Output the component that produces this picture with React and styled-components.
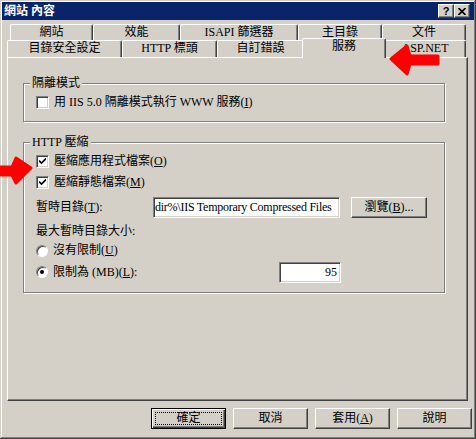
import React from "react";
import styled, { createGlobalStyle } from "styled-components";

const GlobalStyle = createGlobalStyle`
  html, body {
    margin: 0;
    padding: 0;
    background: #d4d0c8;
  }
  body {
    font-family: "Liberation Serif", "Noto Sans CJK TC", serif;
    font-size: 12px;
    color: #000;
  }
`;

const Window = styled.div`
  position: relative;
  width: 476px;
  height: 439px;
  box-sizing: border-box;
  padding: 2px;
  background: #d4d0c8;
  box-shadow: inset -1px -1px #404040, inset 1px 1px #d4d0c8,
    inset -2px -2px #808080, inset 2px 2px #fff;
  display: flex;
  flex-direction: column;
  overflow: hidden;
`;

const TitleBar = styled.div`
  height: 18px;
  background: #0a246a;
  display: flex;
  align-items: center;
  padding: 0 4px 0 2px;
`;

const TitleText = styled.div`
  flex: 1;
  color: #fff;
  font-weight: bold;
  font-size: 12px;
  line-height: 14px;
`;

const CaptionButton = styled.div`
  width: 16px;
  height: 14px;
  box-sizing: border-box;
  background: #d4d0c8;
  border: 1px solid;
  border-color: #fff #404040 #404040 #fff;
  box-shadow: inset -1px -1px #808080;
  display: flex;
  align-items: center;
  justify-content: center;
  font-family: "Liberation Sans", sans-serif;
  font-weight: bold;
  font-size: 11px;
  line-height: 11px;
`;

const TabRow = styled.div`
  display: flex;
  align-items: flex-start;
  height: ${(p) => p.$h}px;
  padding-left: ${(p) => p.$indent}px;
  margin-top: ${(p) => p.$mt || 0}px;
`;

const Tab = styled.div`
  position: relative;
  box-sizing: border-box;
  width: ${(p) => (p.$selected ? p.$w + 4 : p.$w)}px;
  height: ${(p) => (p.$selected ? p.$h + 3 : p.$h)}px;
  margin: ${(p) => (p.$selected ? "-2px -2px 0" : "0")};
  z-index: ${(p) => (p.$selected ? 2 : "auto")};
  background: #d4d0c8;
  border-top: 1px solid #fff;
  border-left: 1px solid #fff;
  border-right: 1px solid #404040;
  border-radius: 2px 2px 0 0;
  box-shadow: inset -1px 0 #808080;
  display: flex;
  justify-content: center;
  padding-top: 1px;
  line-height: 13px;
  white-space: nowrap;
`;

const Panel = styled.div`
  position: relative;
  z-index: 1;
  margin-left: 5px;
  width: 461px;
  height: 344px;
  box-sizing: border-box;
  border-top: 1px solid #fff;
  border-left: 1px solid #fff;
  border-right: 1px solid #404040;
  border-bottom: 1px solid #404040;
  box-shadow: inset -1px -1px #808080;
  padding: 19px 22px 0 15px;
`;

const Group = styled.fieldset`
  margin: ${(p) => p.$mt || 0}px 0 0;
  padding: ${(p) => p.$pad};
  min-inline-size: 0;
  border: 1px solid #808080;
  box-shadow: inset 1px 1px #fff, 1px 1px #fff;
`;

const Legend = styled.legend`
  margin-left: -6px;
  padding: 0 2px;
  background: #d4d0c8;
  line-height: 13px;
`;

const Row = styled.div`
  display: flex;
  align-items: center;
  height: ${(p) => p.$h || 13}px;
  margin-top: ${(p) => p.$mt || 0}px;
  line-height: 13px;
  white-space: nowrap;
`;

const Label = styled.span`
  width: ${(p) => (p.$w ? `${p.$w}px` : "auto")};
  flex: none;
`;

const Key = styled.span`
  text-decoration: underline;
`;

const CheckBox = styled.span`
  width: 13px;
  height: 13px;
  box-sizing: border-box;
  flex: none;
  margin-right: 5px;
  background: #fff;
  border: 1px solid;
  border-color: #808080 #fff #fff #808080;
  box-shadow: inset 1px 1px #404040, inset -1px -1px #d4d0c8;
  display: flex;
  align-items: center;
  justify-content: center;
`;

const Radio = styled.span`
  width: 12px;
  height: 12px;
  box-sizing: border-box;
  flex: none;
  margin-right: 5px;
  border-radius: 50%;
  background: #fff;
  border: 1px solid;
  border-color: #808080 #fff #fff #808080;
  box-shadow: inset 1px 1px #404040;
  display: flex;
  align-items: center;
  justify-content: center;

  &::after {
    content: "";
    width: 4px;
    height: 4px;
    border-radius: 50%;
    background: ${(p) => (p.$on ? "#000" : "transparent")};
  }
`;

const Field = styled.div`
  width: ${(p) => p.$w}px;
  height: 21px;
  box-sizing: border-box;
  flex: none;
  background: #fff;
  border: 1px solid;
  border-color: #808080 #fff #fff #808080;
  box-shadow: inset 1px 1px #404040, inset -1px -1px #d4d0c8;
  display: flex;
  align-items: center;
  justify-content: ${(p) => (p.$right ? "flex-end" : "flex-start")};
  padding: 0 ${(p) => (p.$right ? 3 : 1)}px;
  overflow: hidden;
  white-space: nowrap;
  letter-spacing: ${(p) => (p.$tight ? "-0.25px" : "normal")};
`;

const PushButton = styled.div`
  width: ${(p) => p.$w || 75}px;
  height: 21px;
  box-sizing: border-box;
  flex: none;
  margin-left: ${(p) => p.$ml || 0}px;
  background: #d4d0c8;
  border: 1px solid;
  border-color: ${(p) =>
    p.$default ? "#000" : "#fff #404040 #404040 #fff"};
  box-shadow: ${(p) =>
    p.$default
      ? "inset 1px 1px #fff, inset -1px -1px #404040, inset -2px -2px #808080"
      : "inset -1px -1px #808080"};
  display: flex;
  align-items: center;
  justify-content: center;
  position: relative;
  line-height: 13px;

  &::after {
    content: "";
    display: ${(p) => (p.$default ? "block" : "none")};
    position: absolute;
    inset: 3px;
    border: 1px dotted #000;
  }
`;

const ButtonBar = styled.div`
  display: flex;
  justify-content: flex-end;
  gap: 7px;
  margin-top: 7px;
  padding-right: 2px;
`;

const Arrow = styled.svg`
  position: absolute;
  left: ${(p) => p.$x}px;
  top: ${(p) => p.$y}px;
  z-index: 5;
`;

const Check = () => (
  <svg width="7" height="7" viewBox="0 0 7 7">
    <path d="M0 2.5 L2.5 5 L7 0.5" fill="none" stroke="#000" strokeWidth="1.6" />
  </svg>
);

const row1 = [
  { t: "網站", w: 83 },
  { t: "效能", w: 87 },
  { t: "ISAPI 篩選器", w: 118 },
  { t: "主目錄", w: 84 },
  { t: "文件", w: 84 },
];

const row2 = [
  { t: "目錄安全設定", w: 115 },
  { t: "HTTP 標頭", w: 95 },
  { t: "自訂錯誤", w: 87 },
  { t: "服務", w: 80, selected: true },
  { t: "ASP.NET", w: 82 },
];

export default function App() {
  return (
    <>
      <GlobalStyle />
      <Window>
        <TitleBar>
          <TitleText>網站 內容</TitleText>
          <CaptionButton>?</CaptionButton>
          <CaptionButton>
            <svg width="8" height="7" viewBox="0 0 8 7">
              <path d="M0.5 0 L7.5 7 M7.5 0 L0.5 7" stroke="#000" strokeWidth="1.6" />
            </svg>
          </CaptionButton>
        </TitleBar>

        <TabRow $h={16} $indent={8} $mt={4}>
          {row1.map((t) => (
            <Tab key={t.t} $w={t.w} $h={16}>
              {t.t}
            </Tab>
          ))}
        </TabRow>
        <TabRow $h={17} $indent={5}>
          {row2.map((t) => (
            <Tab key={t.t} $w={t.w} $h={17} $selected={t.selected}>
              {t.t}
            </Tab>
          ))}
        </TabRow>

        <Panel>
          <Group $pad="6px 12px 12px">
            <Legend>隔離模式</Legend>
            <Row>
              <CheckBox />
              用 IIS 5.0 隔離模式執行 WWW 服務(<Key>I</Key>)
            </Row>
          </Group>

          <Group $mt={14} $pad="6px 12px 9px">
            <Legend>HTTP 壓縮</Legend>
            <Row>
              <CheckBox>
                <Check />
              </CheckBox>
              壓縮應用程式檔案(<Key>O</Key>)
            </Row>
            <Row $mt={8}>
              <CheckBox>
                <Check />
              </CheckBox>
              壓縮靜態檔案(<Key>M</Key>)
            </Row>
            <Row $mt={8} $h={21}>
              <Label $w={117}>
                暫時目錄(<Key>T</Key>):
              </Label>
              <Field $w={187} $tight>
                dir%\IIS Temporary Compressed Files
              </Field>
              <PushButton $w={76} $ml={11}>
                瀏覽(<Key>B</Key>)...
              </PushButton>
            </Row>
            <Row $mt={7}>最大暫時目錄大小:</Row>
            <Row $mt={6}>
              <Radio />
              沒有限制(<Key>U</Key>)
            </Row>
            <Row $mt={4} $h={22}>
              <Radio $on />
              <Label $w={226}>
                限制為 (MB)(<Key>L</Key>):
              </Label>
              <Field $w={62} $right>
                95
              </Field>
            </Row>
          </Group>
        </Panel>

        <ButtonBar>
          <PushButton $default>確定</PushButton>
          <PushButton>取消</PushButton>
          <PushButton>
            套用(<Key>A</Key>)
          </PushButton>
          <PushButton>說明</PushButton>
        </ButtonBar>

        <Arrow $x={386} $y={42} width="56" height="36" viewBox="0 0 56 36">
          <polygon
            points="5,17 21,4 24,14 52,14 52,22 24,22 21,32"
            fill="#f00"
            stroke="#f00"
            strokeWidth="3"
            strokeLinejoin="round"
          />
        </Arrow>
        <Arrow $x={0} $y={154} width="36" height="34" viewBox="0 0 36 34">
          <polygon
            points="31,14 16,4 12,13 -2,13 -2,21 12,21 16,29"
            fill="#f00"
            stroke="#f00"
            strokeWidth="3"
            strokeLinejoin="round"
          />
        </Arrow>
      </Window>
    </>
  );
}
